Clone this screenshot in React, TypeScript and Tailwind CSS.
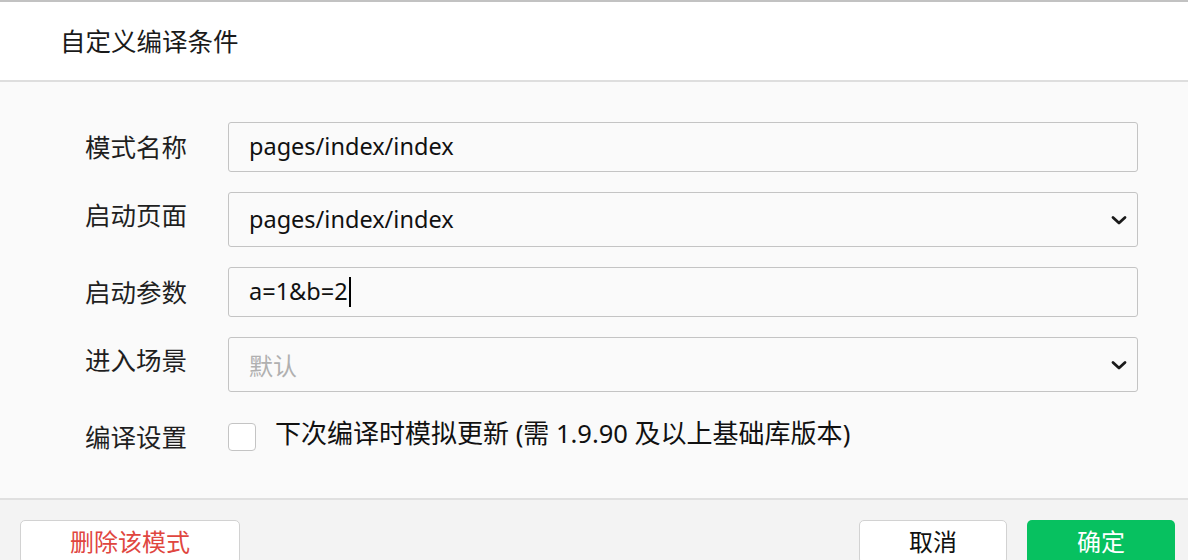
import React from 'react';

const font = { fontFamily: '"Noto Sans", "Noto Sans CJK SC", sans-serif' };

// ==================== SMALL PARTS ====================
const Chevron = () => (
  <svg width="18" height="12" viewBox="0 0 18 12" fill="none">
    <path d="M3 3.5 L9 9 L15 3.5" stroke="#1a1a1a" strokeWidth="2.8" strokeLinecap="round" strokeLinejoin="round" />
  </svg>
);

const Row = ({ label, children, shift }: { label: string; children: React.ReactNode; shift?: boolean }) => (
  <div className="flex items-center">
    <div className={`w-[143px] shrink-0 text-[25.5px] text-[#1f1f1f] ${shift ? '-mt-[8px]' : ''}`}>{label}</div>
    {children}
  </div>
);

const TextBox = ({ value, caret }: { value: string; caret?: boolean }) => (
  <div className="flex h-[50px] w-[910px] items-center rounded-[3px] border border-[#c4c4c4] bg-[#fafafa] pl-[20px] text-[23.5px] text-[#111]">
    <span>{value}</span>
    {caret && <span className="ml-[1px] h-[30px] w-[2px] bg-black" />}
  </div>
);

const SelectBox = ({ value, placeholder }: { value?: string; placeholder?: string }) => (
  <div className="flex h-[55px] w-[910px] items-center justify-between rounded-[3px] border border-[#c4c4c4] bg-[#fafafa] pl-[20px] pr-[9px]">
    {value ? (
      <span className="text-[23.5px] text-[#111]">{value}</span>
    ) : (
      <span className="mt-[3px] text-[24px] text-[#b0b0b0]">{placeholder}</span>
    )}
    <Chevron />
  </div>
);

// ==================== PAGE ====================
export default function App() {
  return (
    <div className="flex h-[560px] w-[1188px] flex-col overflow-hidden bg-white" style={font}>
      {/* Header */}
      <div className="flex h-[82px] shrink-0 items-center border-t-2 border-b-2 border-t-[#c2c2c2] border-b-[#dedede] bg-white pl-[60px]">
        <span className="text-[25.5px] text-[#1a1a1a]">自定义编译条件</span>
      </div>

      {/* Form */}
      <div className="flex h-[418px] shrink-0 flex-col gap-[20px] border-b-2 border-[#e0e0e0] bg-[#fafafa] pl-[85px] pt-[40px]">
        <Row label="模式名称">
          <TextBox value="pages/index/index" />
        </Row>
        <Row label="启动页面" shift>
          <SelectBox value="pages/index/index" />
        </Row>
        <Row label="启动参数">
          <TextBox value="a=1&b=2" caret />
        </Row>
        <Row label="进入场景" shift>
          <SelectBox placeholder="默认" />
        </Row>
        <div className="flex items-center pt-[6px]">
          <div className="w-[143px] shrink-0 text-[25.5px] text-[#1f1f1f]">编译设置</div>
          <div className="h-[28px] w-[28px] rounded-[4px] border border-[#c4c4c4] bg-white" />
          <span className="ml-[19px] -mt-[8px] text-[25.5px] text-[#111]">
            <span className="text-[26px]">下次编译时模拟更新</span> (<span className="text-[26px]">需</span> 1.9.90{' '}
            <span className="text-[26px]">及以上基础库版本</span>)
          </span>
        </div>
      </div>

      {/* Footer */}
      <div className="flex flex-1 items-start justify-between bg-[#f3f3f3] pl-[20px] pr-[13px] pt-[20px]">
        <button className="h-[44px] w-[220px] rounded-[5px] border border-[#d2d2d2] bg-white text-[24px] text-[#e0463f]">
          删除该模式
        </button>
        <div className="flex gap-[20px]">
          <button className="h-[44px] w-[148px] rounded-[5px] border border-[#d2d2d2] bg-white text-[24px] text-[#111]">
            取消
          </button>
          <button className="h-[44px] w-[148px] rounded-[5px] bg-[#07c160] text-[24px] text-white">
            确定
          </button>
        </div>
      </div>
    </div>
  );
}
